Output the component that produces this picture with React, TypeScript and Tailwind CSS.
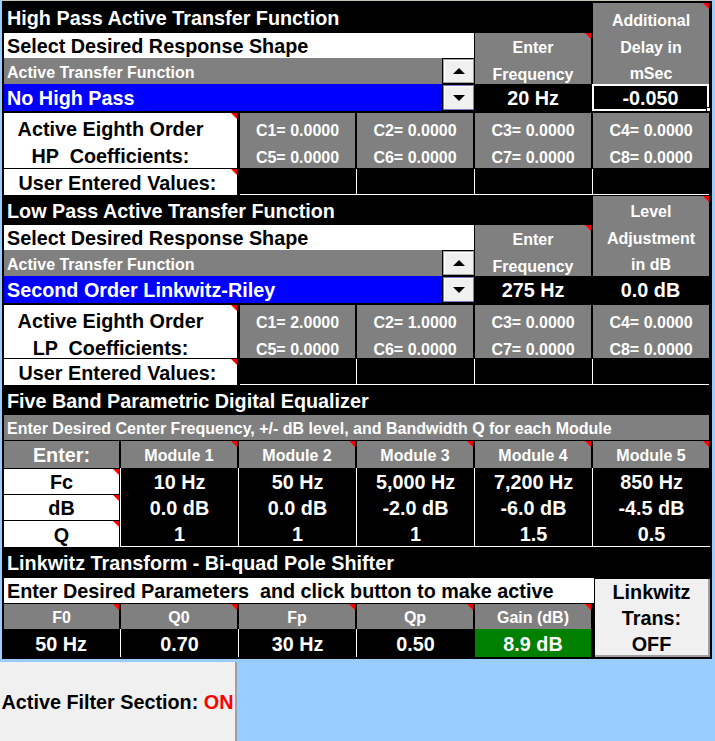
import React from 'react';

const Tri: React.FC = () => (
  <span className="absolute right-0 top-0 h-[6px] w-[6px] bg-[#ff0000] [clip-path:polygon(0_0,100%_0,100%_100%)]" />
);

const Spin: React.FC<{ up?: boolean }> = ({ up }) => (
  <div
    className={`my-px ml-px flex w-[31px] items-center justify-center border bg-[#f0f0f0] shadow-[inset_1px_1px_0_#fff] ${
      up ? 'border-[#a0a0a0]' : 'border-[#7a7ac8]'
    }`}
  >
    <svg width="12" height="6" viewBox="0 0 12 6">
      <path d={up ? 'M0 6L6 0L12 6Z' : 'M0 0L6 6L12 0Z'} fill="#000" />
    </svg>
  </div>
);

type FilterProps = {
  rows: string;
  title: string;
  side: string[];
  sidePad: string;
  shape: string;
  freq: string;
  value: string;
  selected?: boolean;
  tag: string;
  coefs: [string, string][];
};

const coefCols = ['col-start-3 ml-[2px]', 'col-start-4 ml-px', 'col-start-5 ml-px', 'col-start-6 ml-px'];

const FilterSection: React.FC<FilterProps> = (p) => (
  <div className={`grid grid-cols-[repeat(6,118px)] ${p.rows}`}>
    <div className="col-span-5 col-start-1 row-start-1 flex items-center pl-[5px] pt-[3px] text-white">{p.title}</div>
    <div
      className={`relative col-start-6 row-span-3 row-start-1 mr-px mt-px ml-px overflow-hidden bg-[#808080] text-center text-[16px] leading-[26.7px] text-white ${p.sidePad}`}
    >
      {p.side.map((s) => (
        <div key={s}>{s}</div>
      ))}
      <Tri />
    </div>

    <div className="col-span-4 col-start-1 row-start-2 ml-[2px] flex items-center bg-white pl-[3px] pt-[3px] text-black">
      Select Desired Response Shape
    </div>
    <div className="relative col-start-5 row-span-2 row-start-2 mx-px overflow-hidden bg-[#808080] pt-[2px] text-center text-[16px] leading-[26.7px] text-white">
      <div>Enter</div>
      <div>Frequency</div>
      <Tri />
    </div>

    <div className="col-span-4 col-start-1 row-start-3 ml-[2px] flex">
      <div className="flex flex-1 items-center bg-[#808080] pl-[3px] pt-[3px] text-[16px] text-white">
        Active Transfer Function
      </div>
      <Spin up />
    </div>

    <div className="col-span-4 col-start-1 row-start-4 ml-[2px] flex">
      <div className="flex flex-1 items-center bg-[#0000ff] pl-[3px] pt-[3px] text-white">{p.shape}</div>
      <Spin />
    </div>
    <div className="col-start-5 row-start-4 flex items-center justify-center pt-[3px] text-white">{p.freq}</div>
    <div
      className={`relative col-start-6 row-start-4 mr-px flex items-center justify-center pt-[3px] text-white ${
        p.selected ? 'border-2 border-white' : ''
      }`}
    >
      {p.value}
      {p.selected && (
        <span className="absolute -bottom-[3px] -right-[4px] h-[5px] w-[5px] border border-black bg-white" />
      )}
    </div>

    <div className="relative col-span-2 col-start-1 row-start-6 ml-[2px] mr-px whitespace-pre bg-white pr-[20px] pt-[3px] text-center leading-[26.7px] text-black">
      <div>Active Eighth Order</div>
      <div>{p.tag}  Coefficients:</div>
      <Tri />
    </div>
    {p.coefs.map(([a, b], i) => (
      <div
        key={a}
        className={`${coefCols[i]} row-start-6 mr-px bg-[#808080] pt-[5px] text-center text-[16px] leading-[26.5px] text-white`}
      >
        <div>{a}</div>
        <div>{b}</div>
      </div>
    ))}

    <div className="relative col-span-2 col-start-1 row-start-8 ml-[2px] mr-px flex items-center justify-center bg-white pr-[6px] pt-[3px] text-black">
      User Entered Values:
      <Tri />
    </div>
    <div className="col-span-4 col-start-3 row-start-8 ml-[2px] mr-px flex border-b border-white">
      <div className="w-[117px] border-r border-white" />
      <div className="w-[118px] border-r border-white" />
      <div className="w-[118px] border-r border-white" />
      <div className="flex-1" />
    </div>
  </div>
);

const modules: [string, string, string][] = [
  ['10 Hz', '0.0 dB', '1'],
  ['50 Hz', '0.0 dB', '1'],
  ['5,000 Hz', '-2.0 dB', '1'],
  ['7,200 Hz', '-6.0 dB', '1.5'],
  ['850 Hz', '-4.5 dB', '0.5'],
];
const modCols = ['col-start-2', 'col-start-3', 'col-start-4', 'col-start-5', 'col-start-6'];
const eqRows = ['row-start-4', 'row-start-5', 'row-start-6'];

const Equalizer: React.FC = () => (
  <div className="grid grid-cols-[repeat(6,118px)] grid-rows-[30px_26px_27px_26px_26px_27px]">
    <div className="col-span-6 col-start-1 row-start-1 flex items-center pl-[5px] pt-[3px] text-white">
      Five Band Parametric Digital Equalizer
    </div>
    <div className="col-span-6 col-start-1 row-start-2 mb-px ml-[2px] mr-px flex items-center bg-[#808080] pl-[3px] pt-[3px] text-[16px] text-white">
      Enter Desired Center Frequency, +/- dB level, and Bandwidth Q for each Module
    </div>
    <div className="col-start-1 row-start-3 ml-[2px] mr-px flex items-center justify-center bg-[#808080] pt-[3px] text-white">
      Enter:
    </div>
    {modules.map((_, i) => (
      <div
        key={i}
        className={`relative ${modCols[i]} row-start-3 mx-px flex items-center justify-center bg-[#808080] pt-[3px] text-[16px] text-white`}
      >
        Module {i + 1}
        <Tri />
      </div>
    ))}
    {['Fc', 'dB', 'Q'].map((l, r) => (
      <div
        key={l}
        className={`relative col-start-1 ${eqRows[r]} ml-[2px] mr-px mt-px flex items-center justify-center bg-white pt-[3px] text-black`}
      >
        {l}
        <Tri />
      </div>
    ))}
    {modules.map((m, i) =>
      m.map((v, r) => (
        <div
          key={`${i}-${r}`}
          className={`${modCols[i]} ${eqRows[r]} flex items-center justify-center border-l border-white pt-[3px] text-white ${
            r === 2 ? 'border-b' : ''
          }`}
        >
          {v}
        </div>
      ))
    )}
  </div>
);

const ltHeads = ['F0', 'Q0', 'Fp', 'Qp', 'Gain (dB)'];
const ltHeadCols = [
  'col-start-1 ml-[2px] mr-px',
  'col-start-2 mx-px',
  'col-start-3 mx-px',
  'col-start-4 mx-px',
  'col-start-5 mx-px',
];

const Linkwitz: React.FC = () => (
  <div className="grid grid-cols-[repeat(6,118px)] grid-rows-[31px_25px_26px_28px_2px]">
    <div className="col-span-6 col-start-1 row-start-1 flex items-center pl-[5px] pt-[2px] text-white">
      Linkwitz Transform - Bi-quad Pole Shifter
    </div>
    <div className="col-span-5 col-start-1 row-start-2 -mr-[2px] ml-[2px] flex items-center whitespace-pre bg-white pl-[3px] pt-[3px] text-black">
      Enter Desired Parameters  and click button to make active
    </div>
    <div className="col-start-6 row-span-3 row-start-2 ml-[3px] mt-px flex flex-col items-center justify-center border-b-2 border-r-2 border-[#a0a0a0] bg-[#f0f0f0] pt-[2px] leading-[26px] text-black">
      <div>Linkwitz</div>
      <div>Trans:</div>
      <div>OFF</div>
    </div>
    {ltHeads.map((h, i) => (
      <div
        key={h}
        className={`relative ${ltHeadCols[i]} row-start-3 mt-px flex items-center justify-center bg-[#808080] pt-[3px] text-[16px] text-white`}
      >
        {h}
        <Tri />
      </div>
    ))}
    <div className="col-start-1 row-start-4 flex items-center justify-center pt-[3px] text-white">50 Hz</div>
    <div className="col-start-2 row-start-4 flex items-center justify-center border-l border-white pt-[3px] text-white">0.70</div>
    <div className="col-start-3 row-start-4 flex items-center justify-center border-l border-white pt-[3px] text-white">30 Hz</div>
    <div className="col-start-4 row-start-4 flex items-center justify-center border-l border-white pt-[3px] text-white">0.50</div>
    <div className="col-start-5 row-start-4 mx-px flex items-center justify-center bg-[#008000] pt-[3px] text-white">8.9 dB</div>
  </div>
);

export default function App() {
  return (
    <div className="relative h-[741px] w-[715px] overflow-hidden bg-[#99ccff] font-['Liberation_Sans',Arial,sans-serif] text-[19.8px] font-bold">
      <div className="ml-[2px] w-[710px] bg-black">
        <div className="h-[2px] border-t border-[#c8c4b8]" />
        <FilterSection
          rows="grid-rows-[31px_25px_26px_27px_2px_55px_1px_26px]"
          title="High Pass Active Transfer Function"
          side={['Additional', 'Delay in', 'mSec']}
          sidePad="pt-[5px]"
          shape="No High Pass"
          freq="20 Hz"
          value="-0.050"
          selected
          tag="HP"
          coefs={[
            ['C1= 0.0000', 'C5= 0.0000'],
            ['C2= 0.0000', 'C6= 0.0000'],
            ['C3= 0.0000', 'C7= 0.0000'],
            ['C4= 0.0000', 'C8= 0.0000'],
          ]}
        />
        <FilterSection
          rows="grid-rows-[30px_25px_26px_27px_2px_53px_1px_26px]"
          title="Low Pass Active Transfer Function"
          side={['Level', 'Adjustment', 'in dB']}
          sidePad="pt-[3px]"
          shape="Second Order Linkwitz-Riley"
          freq="275 Hz"
          value="0.0 dB"
          tag="LP"
          coefs={[
            ['C1= 2.0000', 'C5= 0.0000'],
            ['C2= 1.0000', 'C6= 0.0000'],
            ['C3= 0.0000', 'C7= 0.0000'],
            ['C4= 0.0000', 'C8= 0.0000'],
          ]}
        />
        <Equalizer />
        <Linkwitz />
      </div>
      <div className="mt-[3px] flex h-[79px] w-[237px] items-center justify-center border-r-2 border-[#a0a0a0] bg-[#f0f0f0] pt-[2px] text-black">
        Active Filter Section:&nbsp;<span className="text-[#ff0000]">ON</span>
      </div>
    </div>
  );
}
